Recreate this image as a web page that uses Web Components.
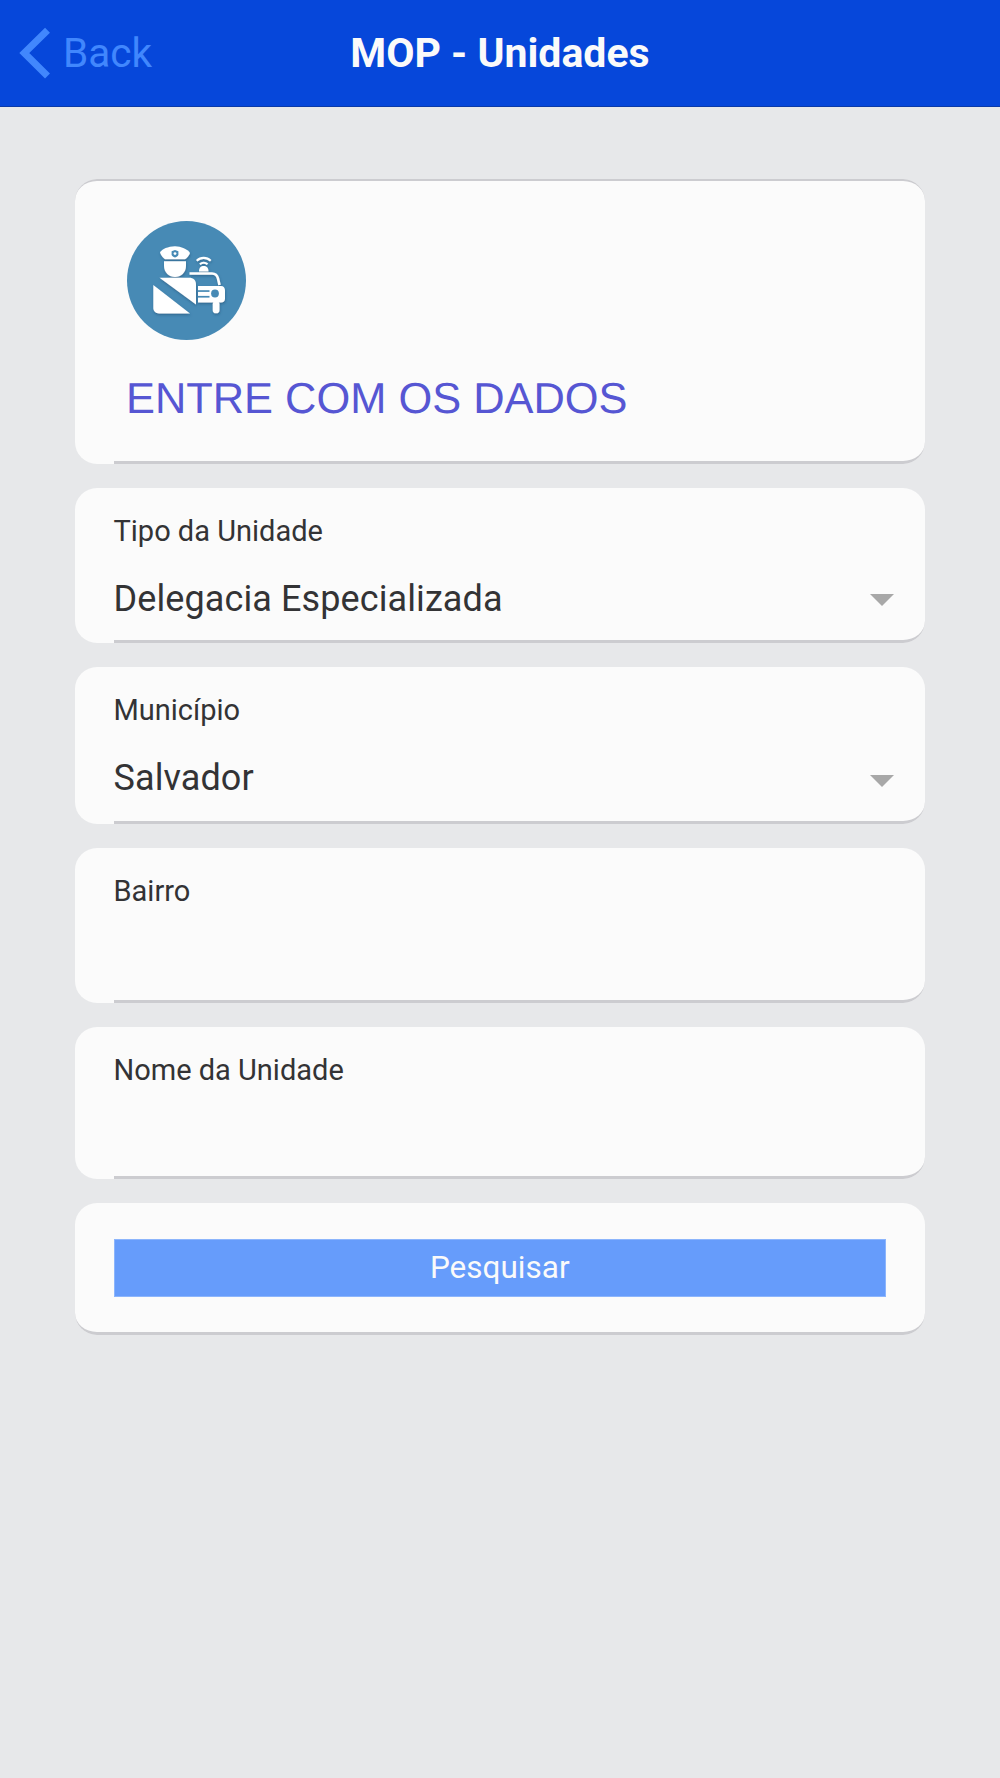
<!DOCTYPE html>
<html lang="pt"><head><meta charset="utf-8"><title>MOP - Unidades</title>
<style>
html,body{margin:0;padding:0;background:#e7e8ea;font-family:Roboto,sans-serif}
</style></head><body>
<mop-app></mop-app>
<script>
class MopHeader extends HTMLElement{constructor(){super();this.attachShadow({mode:'open'}).innerHTML=`<style>
:host{display:flex;align-items:center;box-sizing:border-box;height:107px;background:#0647da;border-bottom:1px solid #0a3aa8;position:relative}
.back{display:flex;align-items:center;padding-left:19px;gap:12px;color:#4187fd;font:400 40.6px/1 Roboto,sans-serif}
svg{display:block}
.title{position:absolute;left:0;right:0;text-align:center;color:#fafafa;font:700 41px/1 Roboto,sans-serif}
</style><div class="back"><svg width="32" height="52" viewBox="0 0 32 52"><path d="M28.5 3.3 L5.3 26 L28.5 49" fill="none" stroke="#4187fd" stroke-width="7"/></svg><span>Back</span></div><div class="title"><slot></slot></div>`}}
customElements.define('mop-header',MopHeader);

class MopCard extends HTMLElement{constructor(){super();this.attachShadow({mode:'open'}).innerHTML=`<style>
:host{display:block;box-sizing:border-box;position:relative;background:#fbfbfb;border-radius:22px}
:host::after{content:"";position:absolute;left:39px;right:0;bottom:0;height:22px;box-sizing:border-box;border-bottom:3px solid #ccccd0;border-radius:0 0 22px 0;pointer-events:none}
:host([full])::after{left:0;border-radius:0 0 22px 22px}
:host([topline])::before{content:"";position:absolute;left:0;right:0;top:0;height:22px;box-sizing:border-box;border-top:2px solid #ccccd0;border-radius:22px 22px 0 0;pointer-events:none}
</style><slot></slot>`}}
customElements.define('mop-card',MopCard);

class MopField extends HTMLElement{
constructor(){super();this.attachShadow({mode:'open'})}
connectedCallback(){const v=this.getAttribute('value')||'';const sel=this.hasAttribute('select');
this.shadowRoot.innerHTML=`<style>
:host{display:block;box-sizing:border-box;height:100%;padding:27px 39px 0 38.5px;color:#333335}
.l{font:400 29px/32px Roboto,sans-serif}
.row{display:flex;align-items:center;justify-content:space-between;margin-top:30px;height:44px}
.v{font:400 36px/44px Roboto,sans-serif;letter-spacing:.1px}
.arrow{width:0;height:0;border-left:12px solid transparent;border-right:12px solid transparent;border-top:12px solid #a8a8a8;margin-right:-8px;margin-top:var(--arrow-top,2px)}
</style><div class="l">${this.getAttribute('label')}</div><div class="row"><span class="v">${v}</span>${sel?'<span class="arrow"></span>':''}</div>`}}
customElements.define('mop-field',MopField);

class MopIcon extends HTMLElement{constructor(){super();this.attachShadow({mode:'open'}).innerHTML=`<style>:host{display:block;width:119px;height:119px}svg{display:block}</style>
<svg width="119" height="119" viewBox="0 0 119 119">
<defs><filter id="s" x="-10%" y="-10%" width="120%" height="130%"><feDropShadow dx="0.5" dy="1.5" stdDeviation="1" flood-color="#1d4e70" flood-opacity=".55"/></filter></defs>
<circle cx="59.5" cy="59.5" r="59.5" fill="#478ab5"/>
<g filter="url(#s)" fill="#fff">
<path d="M33 31.5 C35 28 41 25.5 48 25.3 C54 25.5 60.5 28 63 32 C62 35 60 37 58 38.2 L38 38.2 C36 37 34 34.5 33 31.5Z"/>
<path d="M37 40.2 L59 40.2 L59 45 C59 51.5 54 56 48 56 C42 56 37 51.5 37 45Z"/>
<path d="M32.5 56.8 L62 56.8 C66.5 56.8 69 59.5 69 63.5 L69 83.5Z"/>
<path d="M26.3 64 L63 92.4 L32 92.4 C28.5 92.4 26.3 90 26.3 87Z"/>
<path d="M62.5 52.5 L85 52.5 C89 52.5 90.3 54.5 91 57.5 L92.5 64" fill="none" stroke="#fff" stroke-width="2.6"/>
<path d="M72 50.5 C72 46.5 74 45 76.7 45 C79.4 45 81.5 46.5 81.5 50.5Z"/>
<path d="M72.2 42.6 a6.6 6.6 0 0 1 9 0 l-1.4 1.5 a4.6 4.6 0 0 0 -6.2 0z"/>
<path d="M69 39 a11 11 0 0 1 15.4 0 l-1.4 1.5 a9 9 0 0 0 -12.6 0z"/>
<path d="M71 65 L94 65 C96.5 65 98 67 98 69.5 L98 77.5 C98 80 96.5 81.5 94 81.5 L71 81.5Z"/>
<rect x="85.7" y="80" width="6.8" height="12.3" rx="3.4"/>
</g>
<circle cx="88" cy="72.5" r="3.9" fill="#478ab5"/>
<rect x="71" y="69.2" width="11.5" height="1.7" fill="#478ab5"/>
<rect x="71" y="74.9" width="11.5" height="1.7" fill="#478ab5"/>
<path d="M48 29 l3.4 1.2 v3 c0 1.7 -1.6 2.6 -3.4 3.3 c-1.8 -.7 -3.4 -1.6 -3.4 -3.3 v-3z" fill="#478ab5"/>
<circle cx="48" cy="32.6" r="1.4" fill="#fff"/>
</svg>`}}
customElements.define('mop-icon',MopIcon);

class MopApp extends HTMLElement{constructor(){super();this.attachShadow({mode:'open'}).innerHTML=`<style>
:host{display:block;min-height:1778px}
main{display:flex;flex-direction:column;padding:72px 75px 0}
.hero{height:285px;padding:42px 0 0 52px}
h1{margin:33px 0 0 -1px;font:400 43.4px/52px "Liberation Sans",Arial,sans-serif;color:#5656d3;text-rendering:geometricPrecision}
mop-card{margin-bottom:24px}
.f1{height:155px}.f2{height:157px;--arrow-top:6px}.f3{height:155px}.f4{height:152px}
.btnc{height:132px;padding:36px 39px 0 38.5px}
.btn{display:block;width:100%;height:58px;border:1px solid #8cb5fc;background:#669cfb;color:#fafafa;font:400 31.5px/56px Roboto,sans-serif;padding:0;text-align:center}
</style>
<mop-header>MOP - Unidades</mop-header>
<main>
<mop-card class="hero" topline><mop-icon></mop-icon><h1>ENTRE COM OS DADOS</h1></mop-card>
<mop-card class="f1"><mop-field label="Tipo da Unidade" value="Delegacia Especializada" select></mop-field></mop-card>
<mop-card class="f2"><mop-field label="Município" value="Salvador" select></mop-field></mop-card>
<mop-card class="f3"><mop-field label="Bairro"></mop-field></mop-card>
<mop-card class="f4"><mop-field label="Nome da Unidade"></mop-field></mop-card>
<mop-card class="btnc" full><button class="btn">Pesquisar</button></mop-card>
</main>`}}
customElements.define('mop-app',MopApp);
</script></body></html>
